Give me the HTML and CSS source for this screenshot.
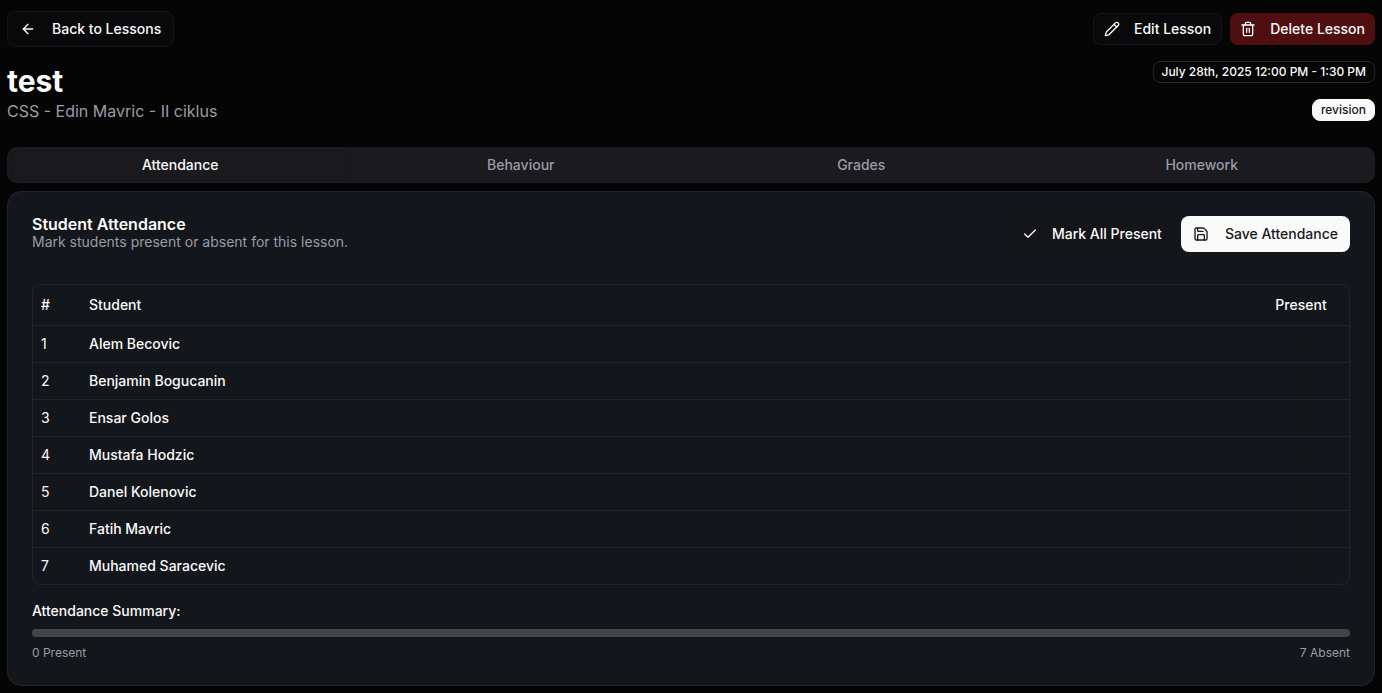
FILE: index.html
```html
<!DOCTYPE html>
<html lang="en">
<head>
<meta charset="utf-8">
<meta name="viewport" content="width=device-width, initial-scale=1">
<title>Lesson: test</title>
<link rel="stylesheet" href="styles.css">
</head>
<body>
<main class="page">
  <div class="toolbar">
    <button type="button" class="btn btn-outline">
      <svg class="icon" viewBox="0 0 24 24" aria-hidden="true"><path d="m12 19-7-7 7-7"/><path d="M19 12H5"/></svg>
      Back to Lessons
    </button>
    <div class="actions">
      <button type="button" class="btn btn-small btn-outline">
        <svg class="icon" viewBox="0 0 24 24" aria-hidden="true"><path d="M21.174 6.812a1 1 0 0 0-3.986-3.987L3.842 16.174a2 2 0 0 0-.5.83l-1.321 4.352a.5.5 0 0 0 .623.622l4.353-1.32a2 2 0 0 0 .83-.497z"/><path d="m15 5 4 4"/></svg>
        Edit Lesson
      </button>
      <button type="button" class="btn btn-small btn-danger">
        <svg class="icon" viewBox="0 0 24 24" aria-hidden="true"><path d="M3 6h18"/><path d="M19 6v14c0 1-1 2-2 2H7c-1 0-2-1-2-2V6"/><path d="M8 6V4c0-1 1-2 2-2h4c1 0 2 1 2 2v2"/><path d="M10 11v6"/><path d="M14 11v6"/></svg>
        Delete Lesson
      </button>
    </div>
  </div>

  <header class="lesson">
    <div class="lesson-name">
      <h1 class="title">test</h1>
      <p class="subtitle">CSS - Edin Mavric - II ciklus</p>
    </div>
    <div class="badges">
      <span class="badge">July 28th, 2025 12:00 PM - 1:30 PM</span>
      <span class="badge badge-solid">revision</span>
    </div>
  </header>

  <div class="tabs" role="tablist">
    <button type="button" class="tab tab-active" role="tab" aria-selected="true">Attendance</button>
    <button type="button" class="tab" role="tab" aria-selected="false">Behaviour</button>
    <button type="button" class="tab" role="tab" aria-selected="false">Grades</button>
    <button type="button" class="tab" role="tab" aria-selected="false">Homework</button>
  </div>

  <section class="card">
    <div class="card-header">
      <div>
        <h2 class="card-title">Student Attendance</h2>
        <p class="card-text">Mark students present or absent for this lesson.</p>
      </div>
      <div class="actions">
        <button type="button" class="btn btn-small btn-quiet">
          <svg class="icon" viewBox="0 0 24 24" aria-hidden="true"><path d="M20 6 9 17l-5-5"/></svg>
          Mark All Present
        </button>
        <button type="button" class="btn btn-primary">
          <svg class="icon" viewBox="0 0 24 24" aria-hidden="true"><path d="M15.2 3a2 2 0 0 1 1.4.6l3.8 3.8a2 2 0 0 1 .6 1.4V19a2 2 0 0 1-2 2H5a2 2 0 0 1-2-2V5a2 2 0 0 1 2-2z"/><path d="M17 21v-7a1 1 0 0 0-1-1H8a1 1 0 0 0-1 1v7"/><path d="M7 3v4a1 1 0 0 0 1 1h7"/></svg>
          Save Attendance
        </button>
      </div>
    </div>

    <div class="table-frame">
      <table class="table">
        <thead>
          <tr><th class="col-number">#</th><th>Student</th><th class="col-present">Present</th></tr>
        </thead>
        <tbody>
          <tr><td>1</td><td><label for="s1">Alem Becovic</label></td><td class="check-cell"><input class="check" type="checkbox" id="s1"></td></tr>
          <tr><td>2</td><td><label for="s2">Benjamin Bogucanin</label></td><td class="check-cell"><input class="check" type="checkbox" id="s2"></td></tr>
          <tr><td>3</td><td><label for="s3">Ensar Golos</label></td><td class="check-cell"><input class="check" type="checkbox" id="s3"></td></tr>
          <tr><td>4</td><td><label for="s4">Mustafa Hodzic</label></td><td class="check-cell"><input class="check" type="checkbox" id="s4"></td></tr>
          <tr><td>5</td><td><label for="s5">Danel Kolenovic</label></td><td class="check-cell"><input class="check" type="checkbox" id="s5"></td></tr>
          <tr><td>6</td><td><label for="s6">Fatih Mavric</label></td><td class="check-cell"><input class="check" type="checkbox" id="s6"></td></tr>
          <tr><td>7</td><td><label for="s7">Muhamed Saracevic</label></td><td class="check-cell"><input class="check" type="checkbox" id="s7"></td></tr>
        </tbody>
      </table>
    </div>

    <div class="summary">
      <h3 class="summary-title">Attendance Summary:</h3>
      <div class="meter" role="progressbar" aria-label="Students present" aria-valuenow="0" aria-valuemin="0" aria-valuemax="7"></div>
      <div class="counts"><span>0 Present</span><span>7 Absent</span></div>
    </div>
  </section>
</main>
</body>
</html>
```

FILE: styles.css
```css
* {
  box-sizing: border-box;
}

body {
  margin: 0;
  background: #050505;
  color: #fafafa;
  font-family: Inter, "Liberation Sans", sans-serif;
  font-size: 14px;
  line-height: 20px;
}

h1, h2, h3, p {
  margin: 0;
}

button {
  font: inherit;
  color: inherit;
  cursor: pointer;
}

.page {
  padding: 11px 7px 7px;
}

.toolbar,
.lesson,
.card-header,
.counts {
  display: flex;
  justify-content: space-between;
}

.toolbar,
.actions {
  display: flex;
  align-items: center;
}

.actions {
  gap: 8px;
}

.btn {
  display: inline-flex;
  align-items: center;
  gap: 16px;
  height: 36px;
  padding: 0 12px;
  border: 0;
  border-radius: 8px;
  font-weight: 500;
  white-space: nowrap;
}

.btn-small {
  gap: 14px;
  height: 32px;
  padding: 0 10px;
}

.btn-outline {
  border: 1px solid #151518;
  background: #09090b;
}

.btn-danger {
  background: #4f0f11;
}

.btn-quiet {
  border: 1px solid #131519;
  background: #141519;
}

.btn-primary {
  background: #fafafa;
  color: #18181b;
}

.icon {
  width: 16px;
  height: 16px;
  fill: none;
  stroke: currentColor;
  stroke-width: 2;
  stroke-linecap: round;
  stroke-linejoin: round;
}

.lesson {
  margin-top: 14px;
}

.lesson-name {
  padding-top: 2px;
}

.title {
  font-size: 30px;
  line-height: 36px;
  font-weight: 700;
}

.subtitle {
  color: #9b9ba6;
  font-size: 16px;
  line-height: 24px;
}

.badges {
  display: flex;
  flex-direction: column;
  align-items: flex-end;
  gap: 16px;
}

.badge {
  padding: 2px 8px;
  border: 1px solid #27272c;
  border-radius: 8px;
  font-size: 12px;
  line-height: 16px;
  font-weight: 500;
}

.badge-solid {
  border-color: #fafafa;
  background: #fafafa;
  color: #18181b;
}

.tabs {
  display: grid;
  grid-template-columns: repeat(4, 1fr);
  height: 36px;
  margin-top: 24px;
  padding: 3px;
  border-radius: 10px;
  background: #1b1a1e;
}

.tab {
  padding: 0;
  border: 1px solid transparent;
  border-radius: 8px;
  background: transparent;
  color: #9b9ba6;
  font-weight: 500;
}

.tab-active {
  border-color: #161519;
  background: #1a191d;
  color: #fafafa;
}

.card {
  margin-top: 8px;
  padding: 24px;
  border: 1px solid #222429;
  border-radius: 14px;
  background: #13171b;
}

.card-title {
  font-size: 16px;
  line-height: 16px;
  font-weight: 600;
}

.card-text {
  color: #9b9ba6;
}

.table-frame {
  margin-top: 32px;
  border: 1px solid #222429;
  border-radius: 8px;
}

.table {
  width: 100%;
  border-collapse: separate;
  border-spacing: 0;
  table-layout: fixed;
}

.table th,
.table td {
  padding: 8px;
  text-align: left;
  font-weight: 500;
}

.table th {
  height: 41px;
  border-bottom: 1px solid #222429;
}

.table td:first-child {
  font-weight: 400;
}

.table tr:not(:last-child) td {
  border-bottom: 1px solid #222429;
}

.table .col-number {
  width: 48px;
}

.table .col-present {
  width: 96px;
  text-align: center;
}

.table .check-cell {
  padding: 8px 0 8px 8px;
}

.check {
  appearance: none;
  display: block;
  width: 16px;
  height: 16px;
  margin: 0 auto;
  border: 1px solid #121519;
  border-radius: 4px;
  background: #141519;
}

.check:checked {
  background: #fafafa;
}

.summary {
  display: grid;
  gap: 8px;
  margin-top: 16px;
}

.summary-title {
  font-size: 14px;
  font-weight: 500;
}

.meter {
  height: 8px;
  border-radius: 4px;
  background: #424548;
}

.counts {
  color: #9b9ba6;
  font-size: 12px;
  line-height: 16px;
}
```
